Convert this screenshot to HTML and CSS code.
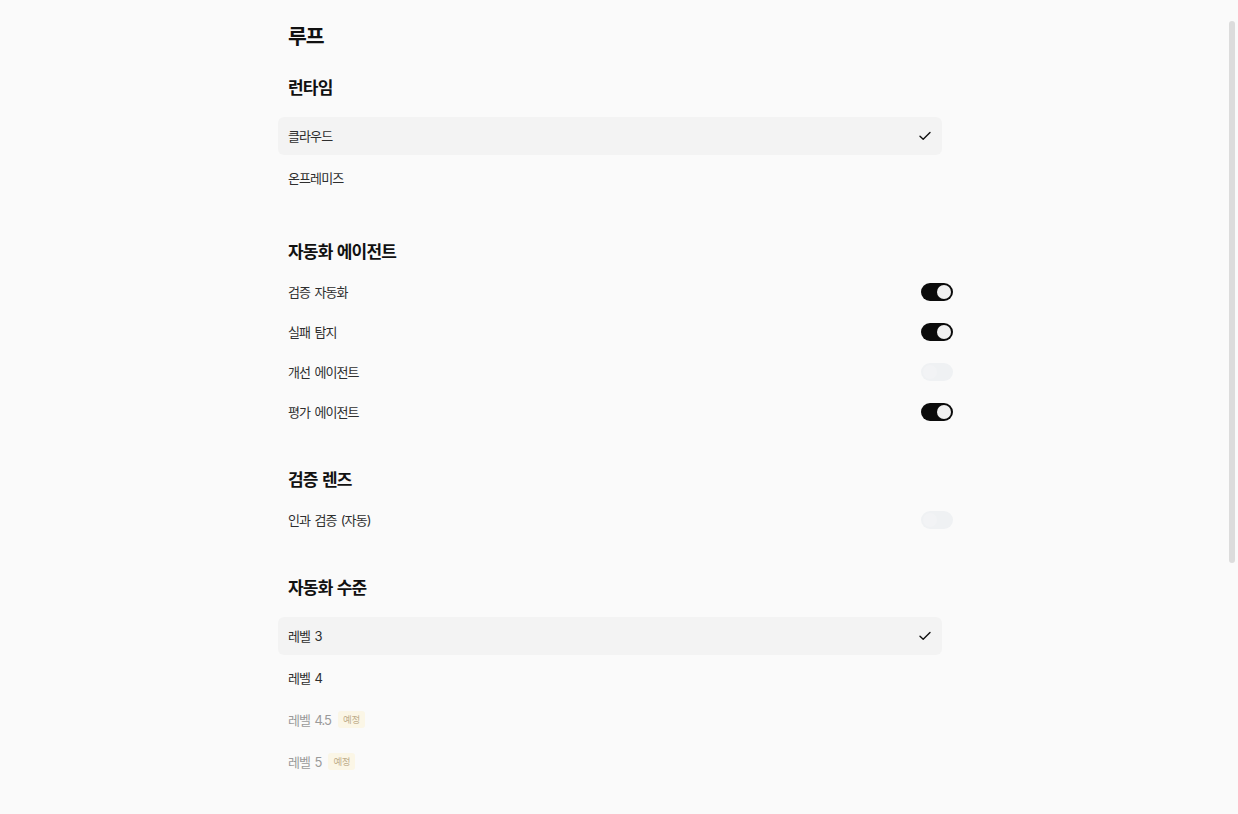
FILE: index.html
```html
<!DOCTYPE html>
<html lang="ko">
<head>
<meta charset="utf-8">
<title>루프</title>
<link rel="stylesheet" href="styles.css">
</head>
<body>
<main class="page">
  <h1 class="title">루프</h1>

  <section class="section">
    <h2 class="heading">런타임</h2>
    <ul class="select-list">
      <li class="opt selected"><span>클라우드</span><svg class="check" viewBox="0 0 12 10" width="12" height="10"><polyline points="1,5.2 4.2,8.3 11,1.5" fill="none" stroke="#111" stroke-width="1.4" stroke-linecap="round" stroke-linejoin="round"/></svg></li>
      <li class="opt"><span>온프레미즈</span></li>
    </ul>
  </section>

  <section class="section">
    <h2 class="heading">자동화 에이전트</h2>
    <ul class="toggle-list">
      <li class="trow"><span>검증 자동화</span><span class="switch on"><span class="knob"></span></span></li>
      <li class="trow"><span>실패 탐지</span><span class="switch on"><span class="knob"></span></span></li>
      <li class="trow"><span>개선 에이전트</span><span class="switch off"><span class="knob"></span></span></li>
      <li class="trow"><span>평가 에이전트</span><span class="switch on"><span class="knob"></span></span></li>
    </ul>
  </section>

  <section class="section">
    <h2 class="heading">검증 렌즈</h2>
    <ul class="toggle-list">
      <li class="trow"><span>인과 검증 (자동)</span><span class="switch off"><span class="knob"></span></span></li>
    </ul>
  </section>

  <section class="section">
    <h2 class="heading">자동화 수준</h2>
    <ul class="select-list">
      <li class="opt selected"><span>레벨 3</span><svg class="check" viewBox="0 0 12 10" width="12" height="10"><polyline points="1,5.2 4.2,8.3 11,1.5" fill="none" stroke="#111" stroke-width="1.4" stroke-linecap="round" stroke-linejoin="round"/></svg></li>
      <li class="opt"><span>레벨 4</span></li>
      <li class="opt disabled"><span>레벨 4.5</span><span class="badge">예정</span></li>
      <li class="opt disabled"><span>레벨 5</span><span class="badge">예정</span></li>
    </ul>
  </section>
</main>
<div class="scrollbar"><div class="thumb"></div></div>
</body>
</html>
```

FILE: styles.css
```css
* { box-sizing: border-box; }
html, body {
  margin: 0;
  padding: 0;
  background: #fafafa;
  height: 100%;
  overflow: hidden;
}
body {
  font-family: Inter, "Noto Sans CJK KR", "Noto Sans", sans-serif;
  color: #2b2b2b;
}
.page {
  width: 675px;
  margin-left: 278px;
  padding-top: 23px;
  display: flex;
  flex-direction: column;
}
.title {
  margin: 0 0 25px;
  padding-left: 10px;
  font-size: 20.5px;
  line-height: 28px;
  font-weight: 700;
  letter-spacing: -1.2px;
  color: #111;
}
.section {
  margin-bottom: 36px;
}
.heading {
  margin: 0 0 8px;
  padding-left: 10px;
  font-size: 17px;
  line-height: 24px;
  font-weight: 700;
  letter-spacing: -0.8px;
  word-spacing: 1px;
  color: #111;
}
ul {
  list-style: none;
  margin: 0;
  padding: 0;
}
.select-list {
  width: 664px;
  padding: 9px 0 7px;
  display: flex;
  flex-direction: column;
  gap: 4px;
}
.opt {
  height: 38px;
  padding: 0 11px 1px 10px;
  border-radius: 6px;
  display: flex;
  align-items: center;
  font-size: 13px;
  letter-spacing: -0.9px;
  word-spacing: 1.5px;
  color: #2e2e2e;
}
.opt.selected {
  background: #f3f3f3;
  justify-content: space-between;
}
.opt.disabled {
  color: #9a9a9a;
}
.check {
  display: block;
}
.badge {
  margin-left: 7px;
  height: 17px;
  padding: 0 5px;
  border-radius: 3px;
  background: #fbf6e6;
  color: #bfae8c;
  font-size: 9.5px;
  letter-spacing: -0.3px;
  line-height: 17px;
}
.toggle-list {
  display: flex;
  flex-direction: column;
}
.trow {
  height: 40px;
  padding-left: 10px;
  padding-bottom: 1px;
  display: flex;
  align-items: center;
  justify-content: space-between;
  font-size: 13px;
  letter-spacing: -0.9px;
  word-spacing: 1.5px;
  color: #2e2e2e;
}
.switch {
  width: 32px;
  height: 18px;
  border-radius: 9px;
  padding: 2px;
  display: flex;
  align-items: center;
}
.switch.on {
  background: #0b0b0b;
  justify-content: flex-end;
}
.switch.off {
  background: #eff1f3;
  justify-content: flex-start;
}
.knob {
  width: 14px;
  height: 14px;
  border-radius: 50%;
  background: #f1f1f1;
}
.switch.off .knob {
  background: #f2f3f5;
}
.scrollbar {
  position: fixed;
  top: 0;
  right: 0;
  width: 10px;
  height: 100%;
}
.thumb {
  position: absolute;
  top: 21px;
  left: 1px;
  width: 6px;
  height: 542px;
  border-radius: 3px;
  background: #dcdcdc;
}
```
